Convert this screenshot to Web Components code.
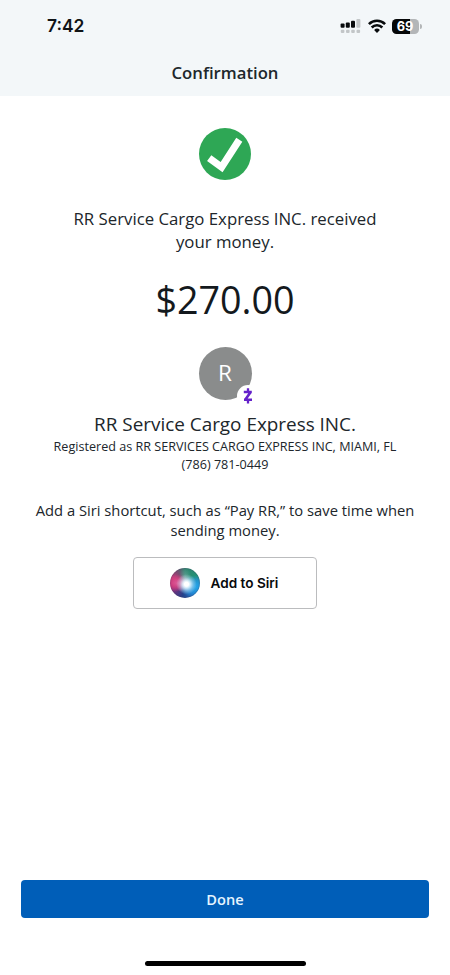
<!DOCTYPE html>
<html lang="en"><head><meta charset="utf-8"><title>Confirmation</title>
<style>html,body{margin:0;background:#fff}body{font-family:"Open Sans","Noto Sans",sans-serif;color:#20262b}</style></head>
<body><payment-confirmation></payment-confirmation>
<script>
const define = (name, html) => {
  const t = document.createElement('template');
  t.innerHTML = html;
  customElements.define(name, class extends HTMLElement {
    constructor() { super(); this.attachShadow({mode: 'open'}).append(t.content.cloneNode(true)); }
  });
};

define('status-bar', `<style>
:host{display:flex;align-items:center;height:52px;box-sizing:border-box;padding:0 28.5px 0 47px;font-family:Inter,sans-serif;color:#101416}
time{font-size:17.4px;font-weight:600;line-height:24px;margin-right:auto}
svg{display:block}.wifi{margin:0 6.5px 0 6.5px}
.bat{display:flex;align-items:center}
.cell{width:27px;height:15px;border-radius:4.5px;background:linear-gradient(90deg,#050708 18.5px,#b3b6b8 18.5px);color:#fff;font:700 12.8px/15px Inter,sans-serif;text-align:center;text-indent:-1px}
.tip{width:1.5px;height:5px;margin-left:1px;border-radius:0 2px 2px 0;background:#b3b6b8}
</style><time>7:42</time>
<svg width="21" height="16" viewBox="0 0 21 16"><g fill="#080b0d"><rect x=".6" y="5.4" width="4" height="4.4" rx="1"/><rect x="5.8" y="4.6" width="4" height="5.2" rx="1"/><rect x="11" y="2.8" width="4" height="7" rx="1"/></g><g fill="#c2c6c8"><rect x="16.4" y="1" width="4" height="8.8" rx="1"/><rect x=".8" y="11.7" width="3.6" height="3.4" rx="1"/><rect x="6" y="11.7" width="3.6" height="3.4" rx="1"/><rect x="11.2" y="11.7" width="3.6" height="3.4" rx="1"/><rect x="16.5" y="11.7" width="3.6" height="3.4" rx="1"/></g></svg>
<svg class="wifi" width="18" height="14" viewBox="0 0 18 14" fill="none" stroke="#080b0d" stroke-width="2.6"><path d="M.9 5.1a11.5 11.5 0 0 1 16.2 0"/><path d="M3.7 8.5a7.4 7.4 0 0 1 10.6 0"/><path d="M6.1 11a4.1 4.1 0 0 1 5.8 0L9 13.9z" fill="#080b0d" stroke="none"/></svg>
<div class="bat"><div class="cell">69</div><div class="tip"></div></div>`);

define('nav-header', `<style>
:host{display:block;height:96px;background:#f3f7f9}
h1{margin:0;padding-top:10px;font-size:16.7px;font-weight:600;line-height:22px;text-align:center;color:#20272b}
</style><status-bar></status-bar><h1><slot></slot></h1>`);

define('success-badge', `<style>:host{display:block;width:52px;height:52px}svg{display:block}</style>
<svg width="52" height="52" viewBox="0 0 52 52"><circle cx="26" cy="26" r="26" fill="#2ea755"/><path d="M10.2 30.2 22.6 39.2 40.3 11.8" fill="none" stroke="#fff" stroke-width="7.2"/></svg>`);

define('text-line', `<style>:host{display:block;text-align:center;white-space:nowrap}</style><slot></slot>`);

define('payee-avatar', `<style>
:host{display:block;position:relative;width:53px;height:53px}
.disc{height:53px;border-radius:50%;background:#8a8c8c;color:#fff;font-size:22.5px;line-height:52px;text-align:center}
svg{position:absolute;left:38.5px;top:38px}
</style><div class="disc"><slot></slot></div>
<svg width="22" height="22" viewBox="0 0 22 22"><circle cx="11" cy="11" r="11" fill="#fff"/><path d="M6.8 7h8M7 14.7h8M13.5 7.3 8.4 14.4" fill="none" stroke="#6421ca" stroke-width="2.6"/><path d="M11 3.3v3.5M11 15v3.5" fill="none" stroke="#6421ca" stroke-width="2.3"/></svg>`);

define('siri-button', `<style>
:host{display:block}
button{display:flex;align-items:center;justify-content:flex-start;box-sizing:border-box;width:184px;height:52px;padding:0 0 0 35.5px;gap:11px;border:1.5px solid #bbbcbe;border-radius:4px;background:#fff;color:#080a0c;font:600 13.6px/20px Inter,sans-serif}
.orb{width:30px;height:30px;border-radius:50%;background:radial-gradient(ellipse at 55% 54%,#fff 0 9%,#e4f6ffdd 17%,#c9e4f477 29%,transparent 44%),radial-gradient(ellipse at 50% 28%,#7fb5ac88 0,transparent 28%),radial-gradient(ellipse at 85% 63%,#24a5e9 0,#2397e4aa 25%,transparent 43%),radial-gradient(ellipse at 25% 50%,#dc5b98 0,#d64482aa 22%,transparent 40%),conic-gradient(from 0deg at 50% 50%,#31846f,#219477 60deg,#218fae 98deg,#256dba 145deg,#25428b 190deg,#563781 220deg,#c22d79 260deg,#ce397c 290deg,#7b4b72 325deg,#31846f);box-shadow:inset 0 0 1.5px #38365b}
</style><button><span class="orb"></span><span><slot></slot></span></button>`);

define('primary-button', `<style>
:host{display:block}button{display:block;width:100%;height:38px;padding:0;border:0;border-radius:4px;background:#005eb8;color:#e5f5ff;font:600 14.6px/39px "Open Sans",sans-serif;text-align:center}
</style><button><slot></slot></button>`);

define('payment-confirmation', `<style>
:host{display:flex;flex-direction:column;height:975px;background:#fff;overflow:hidden}
main{display:flex;flex-direction:column;align-items:center;flex:1}
success-badge{margin-top:32px}
.msg{margin-top:27px;font-size:16.8px;line-height:23px}
.amount{margin-top:22px;font-size:37.7px;line-height:50px;color:#14191d}
payee-avatar{margin-top:21.5px}
.name{margin-top:12px;font-size:18.9px;line-height:24px}
.detail{font-size:12.6px;line-height:18px}
.reg{margin-top:2px}
.hint{margin-top:26px;font-size:14.75px;line-height:20px}
siri-button{margin-top:17px}
footer{padding:0 21px 9px}
.home{width:161px;height:5px;margin:43px auto 0;border-radius:3px;background:#000}
</style>
<nav-header>Confirmation</nav-header>
<main><success-badge></success-badge>
<text-line class="msg">RR Service Cargo Express INC. received<br>your money.</text-line>
<text-line class="amount">$270.00</text-line>
<payee-avatar>R</payee-avatar>
<text-line class="name">RR Service Cargo Express INC.</text-line>
<text-line class="detail reg">Registered as RR SERVICES CARGO EXPRESS INC, MIAMI, FL</text-line>
<text-line class="detail">(786) 781-0449</text-line>
<text-line class="hint">Add a Siri shortcut, such as “Pay RR,” to save time when<br>sending money.</text-line>
<siri-button>Add to Siri</siri-button></main>
<footer><primary-button>Done</primary-button><div class="home"></div></footer>`);
</script></body></html>
